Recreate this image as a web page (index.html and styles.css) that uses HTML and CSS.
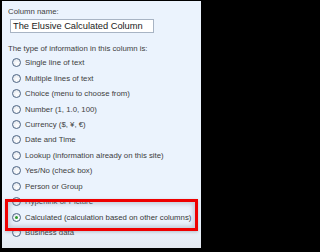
FILE: index.html
```html
<!DOCTYPE html>
<html>
<head>
<meta charset="utf-8">
<link rel="stylesheet" href="styles.css">
</head>
<body>
<div class="panel">
  <div class="label name-label">Column name:</div>
  <div class="input">The Elusive Calculated Column</div>
  <div class="label type-label">The type of information in this column is:</div>
  <ul class="options">
    <li class="opt"><span class="radio"></span>Single line of text</li>
    <li class="opt"><span class="radio"></span>Multiple lines of text</li>
    <li class="opt"><span class="radio"></span>Choice (menu to choose from)</li>
    <li class="opt"><span class="radio"></span>Number (1, 1.0, 100)</li>
    <li class="opt"><span class="radio"></span>Currency ($, ¥, €)</li>
    <li class="opt"><span class="radio"></span>Date and Time</li>
    <li class="opt"><span class="radio"></span>Lookup (information already on this site)</li>
    <li class="opt"><span class="radio"></span>Yes/No (check box)</li>
    <li class="opt"><span class="radio"></span>Person or Group</li>
    <li class="opt"><span class="radio"></span>Hyperlink or Picture</li>
    <li class="opt selected"><span class="radio checked"></span>Calculated (calculation based on other columns)</li>
    <li class="opt"><span class="radio"></span>Business data</li>
  </ul>
  <div class="highlight"></div>
</div>
</body>
</html>
```
FILE: styles.css
```css
html, body {
  margin: 0;
  padding: 0;
  background: #000;
}
body {
  width: 204px;
  height: 252px;
  overflow: hidden;
}
.panel {
  position: relative;
  margin: 1px 3px 0 2px;
  height: 247px;
  box-sizing: border-box;
  padding: 5px 0 0 6px;
  background: linear-gradient(to bottom, #ebf3fd 0%, #ebf3fd 90%, #e3e8ef 100%);
  font-family: "Liberation Sans", Arial, sans-serif;
  font-size: 7.8px;
  color: #404040;
}
.label {
  height: 11px;
  line-height: 11px;
  white-space: nowrap;
}
.input {
  margin: 2px 0 0 2px;
  width: 144px;
  height: 14px;
  box-sizing: border-box;
  border: 1px solid #a8b4c4;
  background: #fff;
  font-size: 9.3px;
  line-height: 12px;
  padding-left: 2px;
  color: #1a1a1a;
  white-space: nowrap;
}
.type-label {
  margin-top: 10px;
}
.options {
  list-style: none;
  margin: 0;
  padding: 1px 0 0 0;
}
.opt {
  display: flex;
  align-items: center;
  height: 15.45px;
  white-space: nowrap;
}
.radio {
  flex: none;
  width: 9px;
  height: 9px;
  box-sizing: border-box;
  border: 1px solid #4f6684;
  border-radius: 50%;
  background: radial-gradient(circle at 60% 65%, #ffffff 0%, #eef1f5 50%, #c9d1dc 100%);
  margin: 0 4px 0 4px;
  position: relative;
}
.radio.checked::after {
  content: "";
  position: absolute;
  left: 2px;
  top: 2px;
  width: 3px;
  height: 3px;
  border-radius: 50%;
  background: #2f9a2f;
}
.selected {
  color: #383838;
}
.highlight {
  position: absolute;
  left: 3px;
  top: 198px;
  width: 193px;
  height: 32px;
  box-sizing: border-box;
  border: 3px solid #ee0000;
  box-shadow: inset 0 0 4px 2px rgba(120, 130, 145, 0.35), 0 1px 3px rgba(90, 100, 115, 0.35);
}
```
